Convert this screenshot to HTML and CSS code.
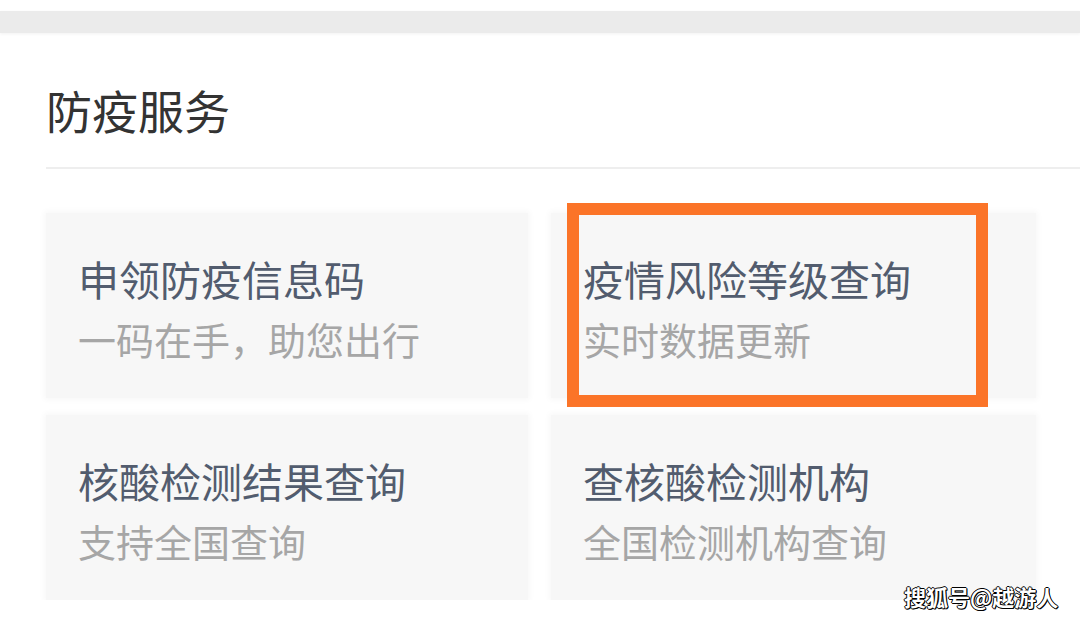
FILE: index.html
```html
<!DOCTYPE html>
<html>
<head>
  <meta charset="utf-8">
  <title>防疫服务</title>
  <link rel="stylesheet" href="styles.css">
</head>
<body>
  <div class="top-bar"></div>

  <div class="section">
    <h2 class="section-title">防疫服务</h2>

    <div class="service-grid">
      <div class="service-card">
        <div class="card-title">申领防疫信息码</div>
        <div class="card-desc">一码在手，助您出行</div>
      </div>

      <div class="service-card">
        <div class="card-title">疫情风险等级查询</div>
        <div class="card-desc">实时数据更新</div>
        <div class="highlight-box"></div>
      </div>

      <div class="service-card">
        <div class="card-title">核酸检测结果查询</div>
        <div class="card-desc">支持全国查询</div>
      </div>

      <div class="service-card">
        <div class="card-title">查核酸检测机构</div>
        <div class="card-desc">全国检测机构查询</div>
      </div>
    </div>
  </div>

  <div class="watermark">搜狐号@越游人</div>
</body>
</html>
```

FILE: styles.css
```css
body {
  margin: 0;
  background-color: #ffffff;
  font-family: "Noto Sans CJK SC", "Noto Sans", sans-serif;
  overflow: hidden;
}

.top-bar {
  height: 22px;
  margin-top: 11px;
  background-color: #ebebeb;
  box-shadow: 0 1px 3px #f2f2f2;
}

.section {
  padding-left: 46px;
}

.section-title {
  margin: 0;
  padding-top: 52px;
  padding-bottom: 34px;
  font-size: 46px;
  line-height: 48px;
  font-weight: 400;
  color: #333333;
  border-bottom: 2px solid #eeeeee;
}

.service-grid {
  display: grid;
  grid-template-columns: 482px 485px;
  grid-template-rows: 185px 185px;
  column-gap: 23px;
  row-gap: 17px;
  margin-top: 44px;
}

.service-card {
  position: relative;
  padding: 45px 0 0 32px;
  background-color: #f7f7f7;
  box-shadow: 0 0 6px 2px #f8f8f8;
}

.card-title {
  font-size: 41px;
  line-height: 41px;
  color: #525c6e;
}

.card-desc {
  margin-top: 21px;
  font-size: 38px;
  line-height: 38px;
  color: #a6a6a6;
}

.highlight-box {
  position: absolute;
  left: 16px;
  top: -10px;
  width: 421px;
  height: 204px;
  box-sizing: border-box;
  border: 12px solid #fb7428;
}

.watermark {
  position: absolute;
  left: 904px;
  top: 580px;
  font-size: 22px;
  font-weight: 700;
  color: #ffffff;
  text-shadow: -1px 0 #000, 1px 0 #000, 0 -1px #000, 0 1px #000, 1px 1px #000;
}
```
